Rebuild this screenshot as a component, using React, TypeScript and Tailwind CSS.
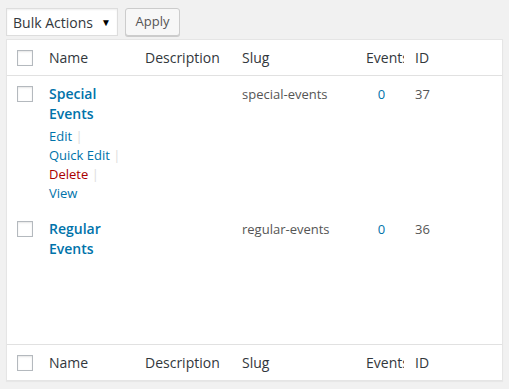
import React from "react";

const font = { fontFamily: '"Open Sans", "Noto Sans", sans-serif' };

function Cb() {
  return <div className="w-4 h-4 border border-[#b4b9be] bg-white shadow-[inset_0_1px_2px_rgba(0,0,0,0.1)]" />;
}

const cols = "grid grid-cols-[34px_96px_97px_124px_49px_1fr]";

function HeadRow({ top }: { top: boolean }) {
  return (
    <div className={`${cols} h-9 items-center text-[14px] text-[#32373c] ${top ? "border-b" : "border-t"} border-[#e1e1e1]`}>
      <div className="pl-[10px]"><Cb /></div>
      <div className="pl-2">Name</div>
      <div className="pl-2">Description</div>
      <div className="pl-2">Slug</div>
      <div className="pl-2 overflow-hidden whitespace-nowrap mr-[3px]">Events</div>
      <div className="pl-2">ID</div>
    </div>
  );
}

function Row({ name, slug, id, actions }: { name: string[]; slug: string; id: string; actions?: boolean }) {
  return (
    <div className={`${cols} pt-2 pb-2 text-[13px] text-[#555]`}>
      <div className="pl-[10px] pt-[2px]"><Cb /></div>
      <div className="pl-2">
        {name.map((n) => (
          <div key={n} className="text-[14px] leading-5 font-semibold text-[#0073aa]">{n}</div>
        ))}
        {actions && (
          <div className="text-[13px] leading-[19px] pt-[3px]">
            <div className="text-[#0073aa]">Edit <span className="text-[#ddd]">|</span></div>
            <div className="text-[#0073aa]">Quick Edit <span className="text-[#ddd]">|</span></div>
            <div className="text-[#a00]">Delete <span className="text-[#ddd]">|</span></div>
            <div className="text-[#0073aa]">View</div>
          </div>
        )}
      </div>
      <div />
      <div className="pl-2 leading-5">{slug}</div>
      <div className="leading-5 text-center text-[#0073aa] pr-[2px]">0</div>
      <div className="pl-2 leading-5">{id}</div>
    </div>
  );
}

export default function App() {
  return (
    <div className="w-[509px] h-[389px] bg-[#f1f1f1] pt-2 px-[6px]" style={font}>
      <div className="flex gap-[7px] h-[28px]">
        <div className="w-[112px] h-[28px] bg-white border border-[#ddd] shadow-[inset_0_1px_2px_rgba(0,0,0,0.07)] flex items-center justify-between pl-[6px] pr-[6px] text-[14px] text-[#32373c]">
          <span>Bulk Actions</span>
          <span className="text-[10px] text-black">▼</span>
        </div>
        <div className="w-[55px] h-[28px] bg-[#f7f7f7] border border-[#ccc] rounded-[3px] shadow-[0_1px_0_#ccc] flex items-center justify-center text-[13px] text-[#555]">
          Apply
        </div>
      </div>
      <div className="mt-[3px] w-[497px] h-[342px] bg-white border border-[#e5e5e5] shadow-[0_1px_1px_rgba(0,0,0,0.04)] flex flex-col">
        <HeadRow top />
        <div className="flex-1">
          <Row name={["Special", "Events"]} slug="special-events" id="37" actions />
          <Row name={["Regular", "Events"]} slug="regular-events" id="36" />
        </div>
        <HeadRow top={false} />
      </div>
    </div>
  );
}
